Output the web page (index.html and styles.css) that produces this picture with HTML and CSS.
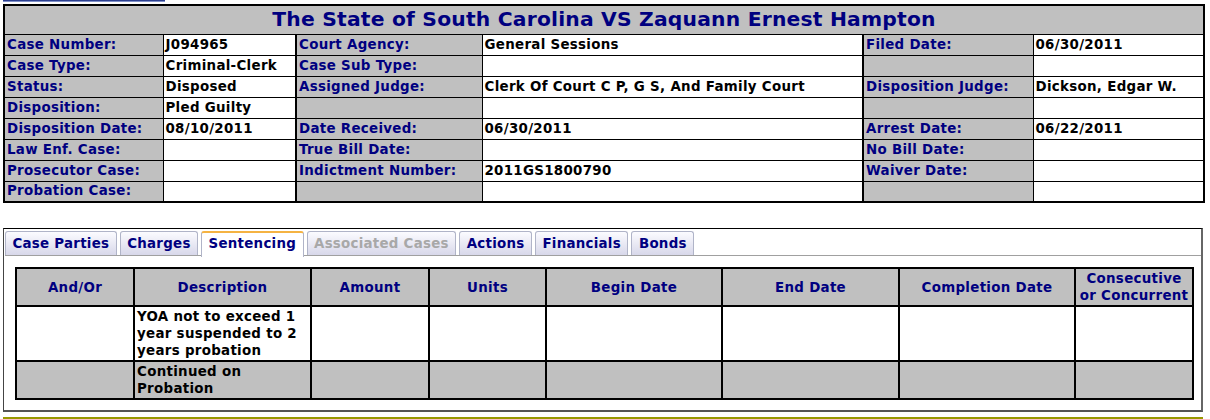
FILE: index.html
```html
<!DOCTYPE html>
<html>
<head>
<meta charset="utf-8">
<link rel="stylesheet" href="styles.css">
</head>
<body>
<div class="topbar"></div>
<table class="case">
  <colgroup>
    <col class="c1"><col class="c2"><col class="c3"><col class="c4"><col class="c5"><col class="c6">
  </colgroup>
  <tr class="trow"><th class="title" colspan="6">The State of South Carolina VS Zaquann Ernest Hampton</th></tr>
  <tr><td class="lbl first">Case Number:</td><td class="val">J094965</td><td class="lbl">Court Agency:</td><td class="val">General Sessions</td><td class="lbl">Filed Date:</td><td class="val">06/30/2011</td></tr>
  <tr><td class="lbl first">Case Type:</td><td class="val">Criminal-Clerk</td><td class="lbl">Case Sub Type:</td><td class="val"></td><td class="lbl"></td><td class="val"></td></tr>
  <tr><td class="lbl first">Status:</td><td class="val">Disposed</td><td class="lbl">Assigned Judge:</td><td class="val">Clerk Of Court C P, G S, And Family Court</td><td class="lbl">Disposition Judge:</td><td class="val">Dickson, Edgar W.</td></tr>
  <tr><td class="lbl first">Disposition:</td><td class="val">Pled Guilty</td><td class="lbl"></td><td class="val"></td><td class="lbl"></td><td class="val"></td></tr>
  <tr><td class="lbl first">Disposition Date:</td><td class="val">08/10/2011</td><td class="lbl">Date Received:</td><td class="val">06/30/2011</td><td class="lbl">Arrest Date:</td><td class="val">06/22/2011</td></tr>
  <tr><td class="lbl first">Law Enf. Case:</td><td class="val"></td><td class="lbl">True Bill Date:</td><td class="val"></td><td class="lbl">No Bill Date:</td><td class="val"></td></tr>
  <tr><td class="lbl first">Prosecutor Case:</td><td class="val"></td><td class="lbl">Indictment Number:</td><td class="val">2011GS1800790</td><td class="lbl">Waiver Date:</td><td class="val"></td></tr>
  <tr><td class="lbl first">Probation Case:</td><td class="val"></td><td class="lbl"></td><td class="val"></td><td class="lbl"></td><td class="val"></td></tr>
</table>

<div class="tabbox">
  <ul class="tabs">
    <li class="tab">Case Parties</li>
    <li class="tab">Charges</li>
    <li class="tab active">Sentencing</li>
    <li class="tab disabled">Associated Cases</li>
    <li class="tab">Actions</li>
    <li class="tab">Financials</li>
    <li class="tab">Bonds</li>
  </ul>
  <table class="sent">
    <colgroup>
      <col class="s1"><col class="s2"><col class="s3"><col class="s4"><col class="s5"><col class="s6"><col class="s7"><col class="s8">
    </colgroup>
    <tr class="hdr"><th>And/Or</th><th>Description</th><th>Amount</th><th>Units</th><th>Begin Date</th><th>End Date</th><th>Completion Date</th><th>Consecutive or Concurrent</th></tr>
    <tr class="r1"><td></td><td class="desc">YOA not to exceed 1 year suspended to 2 years probation</td><td></td><td></td><td></td><td></td><td></td><td></td></tr>
    <tr class="r2"><td></td><td class="desc">Continued on Probation</td><td></td><td></td><td></td><td></td><td></td><td></td></tr>
  </table>
</div>
<div class="notice"></div>
</body>
</html>
```

FILE: styles.css
```css
html, body {
  margin: 0;
  padding: 0;
  background: #ffffff;
}
body {
  padding: 0 7px 0 3px;
  font-family: "DejaVu Sans", Verdana, sans-serif;
  font-weight: bold;
  font-size: 13.4px;
  color: #000000;
}
.topbar {
  width: 162px;
  height: 2px;
  background: #2b3e8f;
  margin-top: -1px;
  margin-bottom: 2px;
  border-bottom: 1px solid #7f8fc8;
}
.case {
  width: 1200px;
  border-collapse: collapse;
  border: 2px solid #000;
  table-layout: fixed;
}
.c1 { width: 159px; }
.c2 { width: 133px; }
.c3 { width: 186px; }
.c4 { width: 381px; }
.c5 { width: 170px; }
.c6 { width: 171px; }
.case tr { height: 21px; }
.case tr.trow { height: 29px; }
.case .title {
  background: #c0c0c0;
  color: #000080;
  font-size: 20.3px;
  padding: 0 0 1px 0;
  text-align: center;
  border-bottom: 1px solid #000;
  letter-spacing: 0.2px;
}
.case td {
  padding: 0 2px;
  border: 1px solid #000;
  white-space: nowrap;
  overflow: hidden;
  letter-spacing: 0.3px;
  vertical-align: middle;
  line-height: 16px;
}
.case td.lbl {
  background: #c0c0c0;
  color: #000080;
  border-left: 2px solid #000;
}
.case td.lbl.first {
  border-left: 0;
}
.case td.val {
  background: #fff;
  color: #000;
}

.tabbox {
  margin-top: 25px;
  width: 1197px;
  border-top: 1px solid #000;
  border-left: 1px solid #444;
  border-right: 2px solid #666;
  border-bottom: 2px solid #555;
  padding: 2px 0 10px 0;
}
.tabs {
  list-style: none;
  margin: 0 0 0 1px;
  padding: 0;
  display: flex;
  gap: 3px;
  border-bottom: 1px solid #a0a0a0;
  height: 24px;
}
.tab {
  height: 23px;
  line-height: 23px;
  padding: 0 6.5px;
  border: 1px solid #b0b4c8;
  border-bottom: 0;
  border-radius: 3px 3px 0 0;
  background: linear-gradient(#fbfbff, #e6e6f2 60%, #d8d8ea);
  color: #000080;
  letter-spacing: 0.25px;
}
.tab.active {
  background: #fff;
  border-top: 2px solid #f5b342;
  height: 23px;
  line-height: 22px;
  margin-bottom: -1px;
  padding-bottom: 1px;
}
.tab.disabled {
  color: #a8a8a8;
}
.sent {
  margin: 11px 0 0 11px;
  width: 1177px;
  border-collapse: collapse;
  table-layout: fixed;
  border: 2px solid #000;
}
.s1 { width: 118px; }
.s2 { width: 177px; }
.s3 { width: 118px; }
.s4 { width: 117px; }
.s5 { width: 176px; }
.s6 { width: 177px; }
.s7 { width: 176px; }
.s8 { width: 118px; }
.sent tr.hdr { height: 38px; }
.sent tr.r1 { height: 55px; }
.sent tr.r2 { height: 38px; }
.sent th {
  background: #c0c0c0;
  color: #000080;
  padding: 0 2px;
  border: 2px solid #000;
  text-align: center;
  line-height: 17px;
  letter-spacing: 0.3px;
}
.sent td {
  border: 2px solid #000;
  padding: 1px 2px;
  line-height: 17px;
  vertical-align: top;
  letter-spacing: 0.3px;
}
.sent .r1 td { background: #fff; }
.sent .r2 td { background: #c0c0c0; }
.notice {
  margin-top: 5px;
  width: 1199px;
  height: 10px;
  border-top: 2px solid #999900;
  border-left: 1px solid #999900;
  background: #ffffc4;
}
```
